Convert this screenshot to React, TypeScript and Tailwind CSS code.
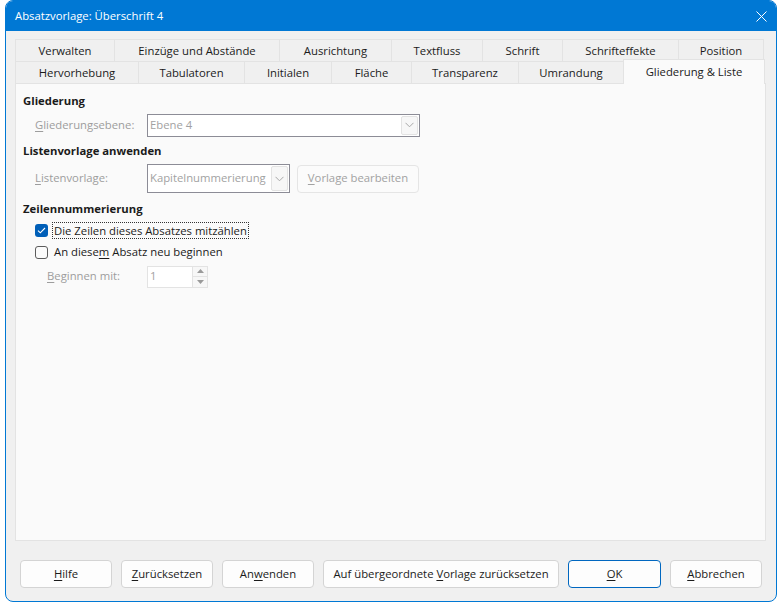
import React from 'react';

const row1 = [
  { label: 'Verwalten', w: 'w-[99px]' },
  { label: 'Einzüge und Abstände', w: 'w-[165px]' },
  { label: 'Ausrichtung', w: 'w-[112px]' },
  { label: 'Textfluss', w: 'w-[91px]' },
  { label: 'Schrift', w: 'w-[80px]' },
  { label: 'Schrifteffekte', w: 'w-[116px]' },
  { label: 'Position', w: 'w-[86px]' },
];

const row2 = [
  { label: 'Hervorhebung', w: 'w-[123px]' },
  { label: 'Tabulatoren', w: 'w-[106px]' },
  { label: 'Initialen', w: 'w-[87px]' },
  { label: 'Fläche', w: 'w-[80px]' },
  { label: 'Transparenz', w: 'w-[107px]' },
  { label: 'Umrandung', w: 'w-[105px]' },
];

// mnemonic letter
const M = ({ children }: { children: React.ReactNode }) => (
  <u className="underline underline-offset-[2px] decoration-1">{children}</u>
);

const Chevron = () => (
  <svg width="9" height="6" viewBox="0 0 9 6" fill="none">
    <path d="M0.5 0.8 L4.5 4.8 L8.5 0.8" stroke="#a8a8a8" strokeWidth="1" />
  </svg>
);

const Select = ({ value, w, h }: { value: string; w: string; h: string }) => (
  <div className={`flex ${w} ${h} bg-white border border-[#8c8c96] items-stretch`}>
    <span className="flex-1 pl-[2px] flex items-center text-[#a2a2a2] overflow-hidden whitespace-nowrap">{value}</span>
    <span className="w-[17px] my-[1px] mr-[1px] bg-[#f7f7f7] border border-[#e3e3e3] rounded-[2px] flex items-center justify-center">
      <Chevron />
    </span>
  </div>
);

const Button = ({ children, w, primary }: { children: React.ReactNode; w: string; primary?: boolean }) => (
  <button
    className={`${w} h-[28px] rounded-[4px] bg-[#fdfdfd] border ${
      primary ? 'border-[#0067c0]' : 'border-[#d4d4d4]'
    } text-[#1b1b1b] flex items-center justify-center`}
  >
    {children}
  </button>
);

export default function App() {
  return (
    <div className="w-[782px] h-[608px] bg-white overflow-hidden text-[11.3px] text-[#1b1b1b] [font-family:'Open_Sans',sans-serif]">
      <div className="ml-[5px] w-[772px] h-[602px] border border-[#0078d4] rounded-[8px] bg-[#f0f0f0] overflow-hidden flex flex-col">
        <div className="h-[30px] bg-[#0078d4] flex items-center justify-between pl-[9px] pr-[9px] shrink-0">
          <span className="text-white pt-[1px]">Absatzvorlage: Überschrift 4</span>
          <svg width="11" height="11" viewBox="0 0 11 11">
            <path d="M0.5 0.5 L10.5 10.5 M10.5 0.5 L0.5 10.5" stroke="white" strokeWidth="1" />
          </svg>
        </div>

        <div className="px-[9px] pt-[8px] flex flex-col">
          <div className="flex h-[22px]">
            {row1.map((t) => (
              <div
                key={t.label}
                className={`${t.w} h-full pt-[1px] border border-b-0 border-r-0 last:border-r border-[#e3e3e3] bg-[#f0f0f0] flex items-center justify-center`}
              >
                {t.label}
              </div>
            ))}
          </div>
          <div className="flex h-[22px] items-end">
            {row2.map((t) => (
              <div
                key={t.label}
                className={`${t.w} h-full pt-[1px] border border-b-0 border-r-0 border-[#e3e3e3] bg-[#f0f0f0] flex items-center justify-center`}
              >
                {t.label}
              </div>
            ))}
            <div className="w-[142px] h-[25px] -mb-[1px] relative z-10 border border-b-0 border-[#e3e3e3] bg-[#fafafa] flex items-start pt-[4px] justify-center">
              Gliederung &amp; Liste
            </div>
          </div>

          <div className="w-[751px] h-[458px] border border-[#e3e3e3] bg-[#fafafa] pt-[8px] pl-[7px] flex flex-col">
            <div className="h-[18px] leading-[18px] font-bold">Gliederung</div>
            <div className="mt-[4px] flex items-center h-[22px]">
              <span className="w-[124px] pl-[12px] text-[#9d9d9d]">
                <M>G</M>liederungsebene:
              </span>
              <Select value="Ebene 4" w="w-[273px]" h="h-[23px]" />
            </div>

            <div className="mt-[6px] h-[18px] leading-[18px] font-bold">Listenvorlage anwenden</div>
            <div className="mt-[4px] flex items-center h-[29px]">
              <span className="w-[124px] pl-[12px] text-[#9d9d9d]">
                <M>L</M>istenvorlage:
              </span>
              <Select value="Kapitelnummerierung" w="w-[143px]" h="h-[29px]" />
              <div className="ml-[7px] w-[122px] h-[28px] rounded-[4px] border border-[#e5e5e5] bg-[#fbfbfb] text-[#a2a2a2] flex items-center justify-center">
                <span>
                  <M>V</M>orlage bearbeiten
                </span>
              </div>
            </div>

            <div className="mt-[7px] h-[18px] leading-[18px] font-bold">Zeilennummerierung</div>
            <div className="mt-[3px] h-[18px] flex items-center pl-[12px]">
              <span className="w-[13px] h-[13px] rounded-[3px] bg-[#005fb8] flex items-center justify-center">
                <svg width="9" height="7" viewBox="0 0 9 7" fill="none">
                  <path d="M1 3.6 L3.3 5.8 L8 1" stroke="white" strokeWidth="1.1" />
                </svg>
              </span>
              <span className="ml-[4px] px-[1px] h-[17px] leading-[15px] border border-dotted border-[#333]">
                Die Zeilen dieses Absatzes mitzählen
              </span>
            </div>
            <div className="mt-[4px] h-[18px] flex items-center pl-[12px]">
              <span className="w-[13px] h-[13px] rounded-[3px] border border-[#5c5c5c] bg-[#fbfbfb]" />
              <span className="ml-[6px]">
                An diese<M>m</M> Absatz neu beginnen
              </span>
            </div>
            <div className="mt-[5px] h-[21px] flex items-center">
              <span className="w-[124px] pl-[24px] text-[#9d9d9d]">
                <M>B</M>eginnen mit:
              </span>
              <div className="w-[61px] h-[22px] flex border border-[#e3e3e3] bg-white">
                <span className="flex-1 pl-[2px] flex items-center text-[#a2a2a2]">1</span>
                <span className="w-[15px] flex flex-col border-l border-[#e3e3e3] bg-[#f7f7f7]">
                  <span className="flex-1 flex items-center justify-center border-b border-[#e3e3e3]">
                    <svg width="7" height="4" viewBox="0 0 7 4">
                      <path d="M0 4 L3.5 0 L7 4 Z" fill="#9a9a9a" />
                    </svg>
                  </span>
                  <span className="flex-1 flex items-center justify-center">
                    <svg width="7" height="4" viewBox="0 0 7 4">
                      <path d="M0 0 L3.5 4 L7 0 Z" fill="#9a9a9a" />
                    </svg>
                  </span>
                </span>
              </div>
            </div>
          </div>

          <div className="mt-[19px] flex pl-[5px] gap-[9px]">
            <Button w="w-[92px]">
              <span><M>H</M>ilfe</span>
            </Button>
            <Button w="w-[92px]">
              <span><M>Z</M>urücksetzen</span>
            </Button>
            <Button w="w-[92px]">
              <span>An<M>w</M>enden</span>
            </Button>
            <Button w="w-[236px]">
              <span>Auf übergeordnete <M>V</M>orlage zurücksetzen</span>
            </Button>
            <Button w="w-[93px]" primary>
              <span><M>O</M>K</span>
            </Button>
            <Button w="w-[92px]">
              <span><M>A</M>bbrechen</span>
            </Button>
          </div>
        </div>
      </div>
    </div>
  );
}
